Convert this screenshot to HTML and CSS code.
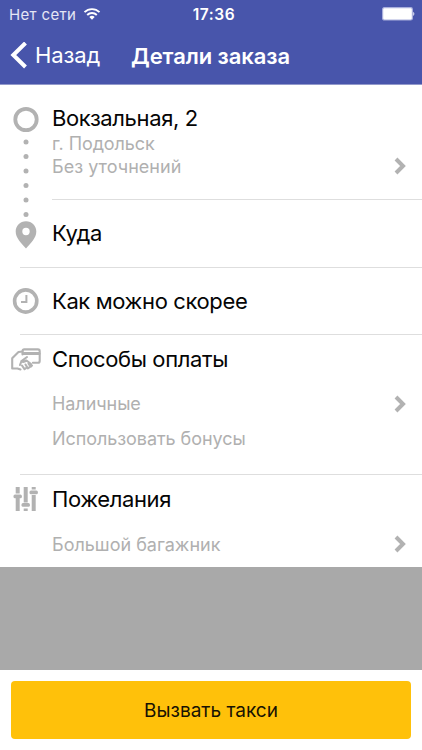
FILE: index.html
```html
<!DOCTYPE html>
<html lang="ru">
<head>
<meta charset="utf-8">
<title>Детали заказа</title>
<link rel="stylesheet" href="styles.css">
</head>
<body>
<div class="screen">
  <header class="header">
    <div class="status">
      <div class="carrier">
        <span class="carrier-name">Нет сети</span>
        <svg class="wifi" width="18" height="14" viewBox="0 0 18 14" fill="none" stroke="#fff" stroke-width="1.9">
          <path d="M1.5 5.2a10.6 10.6 0 0 1 15 0M4.2 8a6.8 6.8 0 0 1 9.600 0"/>
          <path d="M6.300 10.100a3.800 3.800 0 0 1 5.400 0L9 12.800z" fill="#fff" stroke="none"/>
        </svg>
      </div>
      <span class="time">17:36</span>
      <svg class="battery" width="34" height="14" viewBox="0 0 34 14">
        <rect x=".6" y=".6" width="29.800" height="12.400" rx="1.800" fill="#fff" stroke="#a9afdc" stroke-width="1.200"/>
        <path d="M31.300 4.700q2 2.100 0 4.200z" fill="#fff"/>
      </svg>
    </div>
    <nav class="nav">
      <a class="back">
        <svg width="18" height="28" viewBox="0 0 18 28" fill="none" stroke="#fff" stroke-width="4"><path d="M15.500 1L3.300 13l12.200 12"/></svg>
        <span class="back-text">Назад</span>
      </a>
      <h1 class="title">Детали заказа</h1>
    </nav>
  </header>

  <main class="details">
    <section class="route">
      <svg class="rail" width="52" height="181" viewBox="0 0 52 181" fill="#b2b2b2">
        <circle cx="26" cy="34.500" r="10.700" fill="none" stroke="#b2b2b2" stroke-width="3.800"/>
        <circle cx="26" cy="57" r="2.500"/><circle cx="26" cy="71.500" r="2.500"/><circle cx="26" cy="86" r="2.500"/>
        <circle cx="26" cy="100.500" r="2.500"/><circle cx="26" cy="115" r="2.500"/><circle cx="26" cy="129.500" r="2.500"/>
        <path fill-rule="evenodd" d="M26 136.200c-5.900 0-10.300 4.500-10.300 10.200 0 6.600 5.600 11.600 10.300 17.200 4.700-5.600 10.300-10.600 10.300-17.200 0-5.700-4.400-10.200-10.300-10.200zm0 6.600a3.700 3.700 0 1 1 0 7.400 3.700 3.700 0 0 1 0-7.400z"/>
      </svg>
      <div class="stops">
        <div class="stop from">
          <div>
            <div class="main-text address">Вокзальная, 2</div>
            <div class="sub city">г. Подольск</div>
            <div class="sub note">Без уточнений</div>
          </div>
          <svg class="chevron" width="12" height="18" viewBox="0 0 12 18"><path d="M2 2l7 7-7 7"/></svg>
        </div>
        <div class="stop to"><div class="main-text where">Куда</div></div>
      </div>
    </section>

    <section class="row when">
      <div class="line">
        <svg class="icon" width="32" height="28" viewBox="0 0 32 28" fill="none" stroke="#b2b2b2">
          <circle cx="15.700" cy="14" r="11.100" stroke-width="3.600"/><path d="M16.400 8v6.900H11" stroke-width="2"/>
        </svg>
        <div class="main-text soon">Как можно скорее</div>
      </div>
    </section>

    <section class="row payment">
      <div class="line">
        <svg class="icon" width="32" height="28" viewBox="0 0 32 28" fill="none" stroke="#b2b2b2" stroke-width="2.100" stroke-linejoin="round" stroke-linecap="round">
          <path d="M2.200 23.500V13.300L8.500 7l4-.5M2.200 23.500h5.300l3 1"/>
          <path d="M12.500 9.500V6.200q0-1.800 1.800-1.800h13.600q1.800 0 1.800 1.800v9.800q0 1.800-1.800 1.800h-5"/>
          <path d="M13.500 8.500h15.500" stroke-width="3.200"/>
          <path d="M17 12l-5.500 4-1.500 4M11.500 16q1 2 5-.5l4.500 3.500M12 20.500l2.500 3.700 1.500-1M15.500 19.500l2.300 3.800 1.500-1M18.500 18.700l2.200 3 1.300-1.200"/>
        </svg>
        <div class="main-text methods">Способы оплаты</div>
      </div>
      <div class="line option">
        <div class="sub cash">Наличные</div>
        <svg class="chevron" width="12" height="18" viewBox="0 0 12 18"><path d="M2 2l7 7-7 7"/></svg>
      </div>
      <div class="line option"><div class="sub bonus">Использовать бонусы</div></div>
    </section>

    <section class="row wishes">
      <div class="line">
        <svg class="icon" width="32" height="28" viewBox="0 0 32 28" fill="#b2b2b2">
          <path d="M5.700 2h4v6.500h-4zM5.700 13h4v13h-4zM13.700 2h4v15.500h-4zM13.700 23.500h4V26h-4zM21.700 2h4v2.500h-4zM21.700 10h4v16h-4z"/>
          <rect x="3.500" y="9.500" width="8.400" height="3.700" rx="1.500"/><rect x="11.500" y="18" width="8.400" height="3.700" rx="1.500"/><rect x="19.500" y="5.500" width="8.400" height="3.700" rx="1.500"/>
        </svg>
        <div class="main-text wish">Пожелания</div>
      </div>
      <div class="line option">
        <div class="sub trunk">Большой багажник</div>
        <svg class="chevron" width="12" height="18" viewBox="0 0 12 18"><path d="M2 2l7 7-7 7"/></svg>
      </div>
    </section>
  </main>

  <footer class="footer"><button class="call"><span class="call-text">Вызвать такси</span></button></footer>
</div>
</body>
</html>
```
FILE: styles.css
```css
* { box-sizing: border-box; }
body {
  margin: 0;
  font-family: Inter, "Liberation Sans", sans-serif;
  color: #050505;
}
.screen {
  width: 422px;
  height: 750px;
  display: flex;
  flex-direction: column;
  background: #a9a9a9;
  overflow: hidden;
  white-space: nowrap;
}
.header {
  height: 85px;
  flex: none;
  background: #4855ab;
  border-bottom: 1px solid #9299cb;
  color: #fff;
}
.status {
  height: 28px;
  padding: 0 6px 0 9px;
  display: grid;
  grid-template-columns: 1fr auto 1fr;
  align-items: center;
}
.carrier { display: flex; align-items: center; gap: 7px; }
.carrier-name { font-size: 15px; letter-spacing: .35px; color: #e4e6f5; }
.time { font-size: 15.500px; font-weight: 600; letter-spacing: .6px; padding-left: 3px; }
.battery { justify-self: end; }
.nav {
  height: 55px;
  display: flex;
  align-items: center;
  padding-left: 10px;
}
.back { display: flex; align-items: center; width: 121px; gap: 7px; font-size: 22px; }
.back-text { letter-spacing: -.1px; padding-bottom: 2px; }
.title { margin: 0; font-size: 22px; font-weight: 600; line-height: 28px; letter-spacing: -.08px; }

.details { flex: none; }
.route { display: flex; height: 182px; background: #fff; }
.rail { flex: none; }
.stops { flex: 1; }
.stop { display: flex; justify-content: space-between; }
.from { height: 115px; padding: 19px 16px 0 0; border-bottom: 1px solid #dedede; }
.from .chevron { margin-top: 53px; }
.to { height: 67px; padding-top: 19px; }

.main-text { font-size: 22px; line-height: 28px; letter-spacing: -.38px; }
.sub { font-size: 18px; line-height: 23px; color: #b0b0b0; }
.city { letter-spacing: -.1px; }
.note { letter-spacing: .03px; }
.cash, .bonus { letter-spacing: -.06px; }
.chevron { flex: none; fill: none; stroke: #b2b2b2; stroke-width: 4; }

.row {
  background: linear-gradient(#dedede, #dedede) 20px 0 / 402px 1px no-repeat #fff;
  padding: 20px 16px 0 10px;
}
.line { display: flex; align-items: center; height: 28px; }
.icon { flex: none; width: 32px; margin-right: 10px; }
.option { justify-content: space-between; padding-left: 42px; height: 36px; }
.when { height: 67px; }
.payment { height: 140px; padding-top: 11px; }
.payment .line:nth-child(2) { margin-top: 13px; }
.cash { padding-bottom: 2px; }
.bonus { padding-bottom: 3px; }
.wishes { height: 93px; padding-top: 11px; }
.wishes .option { margin-top: 13px; }

.footer { margin-top: auto; height: 80px; padding: 11px; background: #fff; }
.call {
  display: flex;
  align-items: center;
  justify-content: center;
  width: 400px;
  height: 58px;
  border: 0;
  border-radius: 4px;
  background: #ffc10a;
  color: #171203;
  font: 400 19px Inter, "Liberation Sans", sans-serif;
}
```
